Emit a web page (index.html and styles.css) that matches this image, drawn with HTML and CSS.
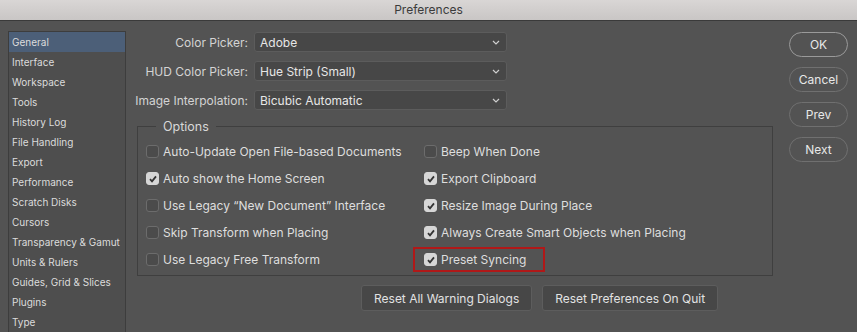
FILE: index.html
```html
<!DOCTYPE html>
<html lang="en">
  <head>
    <meta charset="UTF-8" />
    <meta name="viewport" content="width=device-width, initial-scale=1.0" />
    <title>Preferences</title>
    <link rel="stylesheet" href="styles.css">
  </head>
  <body>
    <div class="window">
      <div class="titlebar">Preferences</div>
      <div class="main">
        <ul class="sidebar">
          <li class="selected">General</li>
          <li>Interface</li>
          <li>Workspace</li>
          <li>Tools</li>
          <li>History Log</li>
          <li>File Handling</li>
          <li>Export</li>
          <li>Performance</li>
          <li>Scratch Disks</li>
          <li>Cursors</li>
          <li>Transparency &amp; Gamut</li>
          <li>Units &amp; Rulers</li>
          <li>Guides, Grid &amp; Slices</li>
          <li>Plugins</li>
          <li>Type</li>
        </ul>

        <div class="panel">
          <div class="fields">
            <label class="field-label">Color Picker:</label>
            <div class="select"><span>Adobe</span><svg class="chevron" viewBox="0 0 8 5"><path d="M1 1l3 3 3-3" /></svg></div>
            <label class="field-label">HUD Color Picker:</label>
            <div class="select"><span>Hue Strip (Small)</span><svg class="chevron" viewBox="0 0 8 5"><path d="M1 1l3 3 3-3" /></svg></div>
            <label class="field-label">Image Interpolation:</label>
            <div class="select"><span>Bicubic Automatic</span><svg class="chevron" viewBox="0 0 8 5"><path d="M1 1l3 3 3-3" /></svg></div>
          </div>

          <fieldset class="options">
            <legend>Options</legend>
            <div class="option-cols">
              <div class="option-col">
                <div class="option"><span class="box"></span>Auto-Update Open File-based Documents</div>
                <div class="option"><span class="box checked"><svg viewBox="0 0 10 10"><path d="M2 5.2l2 2.2 4-5" /></svg></span>Auto show the Home Screen</div>
                <div class="option"><span class="box"></span>Use Legacy “New Document” Interface</div>
                <div class="option"><span class="box"></span>Skip Transform when Placing</div>
                <div class="option"><span class="box"></span>Use Legacy Free Transform</div>
              </div>
              <div class="option-col right">
                <div class="option"><span class="box"></span>Beep When Done</div>
                <div class="option"><span class="box checked"><svg viewBox="0 0 10 10"><path d="M2 5.2l2 2.2 4-5" /></svg></span>Export Clipboard</div>
                <div class="option"><span class="box checked"><svg viewBox="0 0 10 10"><path d="M2 5.2l2 2.2 4-5" /></svg></span>Resize Image During Place</div>
                <div class="option"><span class="box checked"><svg viewBox="0 0 10 10"><path d="M2 5.2l2 2.2 4-5" /></svg></span>Always Create Smart Objects when Placing</div>
                <div class="option highlight"><span class="box checked"><svg viewBox="0 0 10 10"><path d="M2 5.2l2 2.2 4-5" /></svg></span>Preset Syncing</div>
              </div>
            </div>
          </fieldset>

          <div class="reset-buttons">
            <button type="button">Reset All Warning Dialogs</button>
            <button type="button">Reset Preferences On Quit</button>
          </div>
        </div>

        <div class="actions">
          <button type="button" class="pill default">OK</button>
          <button type="button" class="pill">Cancel</button>
          <button type="button" class="pill">Prev</button>
          <button type="button" class="pill">Next</button>
        </div>
      </div>
    </div>
  </body>
</html>
```

FILE: styles.css
```css
body {
  margin: 0;
  padding: 0;
  height: 332px;
  overflow: hidden;
  background-color: #535353;
  font-family: Inter, "Noto Sans", sans-serif;
  font-size: 12px;
  color: #dedede;
}

.titlebar {
  height: 20px;
  line-height: 20px;
  text-align: center;
  font-size: 12px;
  color: #3b3b3b;
  background: linear-gradient(#d9d6d5, #c9c6c5);
  border-bottom: 1px solid #3a3a3a;
}

.main {
  display: flex;
  align-items: flex-start;
  padding-top: 10px;
}

/* left category list */
.sidebar {
  list-style: none;
  margin: 0 0 0 8px;
  padding: 0 0 1px;
  width: 116px;
  background-color: #4e4e4e;
  border: 1px solid #3d3d3d;
  font-size: 10px;
  color: #dcdcdc;
}

.sidebar li {
  height: 20px;
  line-height: 20px;
  padding-left: 3px;
  white-space: nowrap;
}

.sidebar li.selected {
  background-color: #4c5f78;
}

.panel {
  width: 646px;
  padding-top: 1px;
}

.fields {
  display: grid;
  grid-template-columns: 122px 253px;
  column-gap: 6px;
  row-gap: 9px;
  align-items: center;
}

.field-label {
  text-align: right;
  white-space: nowrap;
  color: #d4d4d4;
}

.select {
  display: flex;
  align-items: center;
  justify-content: space-between;
  height: 18px;
  padding: 0 6px 0 5px;
  background-color: #474747;
  border: 1px solid #5c5c5c;
  border-radius: 3px;
  color: #e6e6e6;
}

.chevron {
  width: 8px;
  height: 5px;
  fill: none;
  stroke: #cfcfcf;
  stroke-width: 1.2;
}

/* options group */
.options {
  margin: 9px 0 0 11px;
  padding: 4px 0 2px 8px;
  width: 626px;
  border: 1px solid #3f3f3f;
}

.options legend {
  margin-left: 10px;
  padding: 0 7px;
  font-size: 12.5px;
  color: #d8d8d8;
}

.option-cols {
  display: flex;
}

.option-col {
  width: 278px;
}

.option {
  display: flex;
  align-items: center;
  gap: 4px;
  height: 27px;
  white-space: nowrap;
}

.box {
  display: flex;
  align-items: center;
  justify-content: center;
  box-sizing: border-box;
  width: 13px;
  height: 13px;
  border: 1px solid #6c6c6c;
  border-radius: 3px;
  background-color: #4b4b4b;
}

.box.checked {
  border-color: #d6d6d6;
  background-color: #d6d6d6;
}

.box svg {
  width: 10px;
  height: 10px;
  fill: none;
  stroke: #333333;
  stroke-width: 1.8;
}

.option.highlight {
  box-sizing: border-box;
  width: 132px;
  height: 25px;
  margin: 1px 0 0 -11px;
  padding-left: 9px;
  border: 2px solid #b01818;
}

.reset-buttons {
  display: flex;
  gap: 10px;
  margin: 9px 0 0 235px;
}

.reset-buttons button {
  height: 26px;
  padding: 0 12px;
  font-family: inherit;
  font-size: 12px;
  color: #e2e2e2;
  background-color: #474747;
  border: 1px solid #5d5d5d;
  border-radius: 3px;
}

/* right column buttons */
.actions {
  display: flex;
  flex-direction: column;
  gap: 10px;
  margin-left: 17px;
  padding-top: 1px;
}

.pill {
  width: 59px;
  height: 25px;
  font-family: inherit;
  font-size: 12px;
  color: #e8e8e8;
  background-color: #535353;
  border: 1px solid #707070;
  border-radius: 13px;
}

.pill.default {
  border-color: #9a9a9a;
}
```
